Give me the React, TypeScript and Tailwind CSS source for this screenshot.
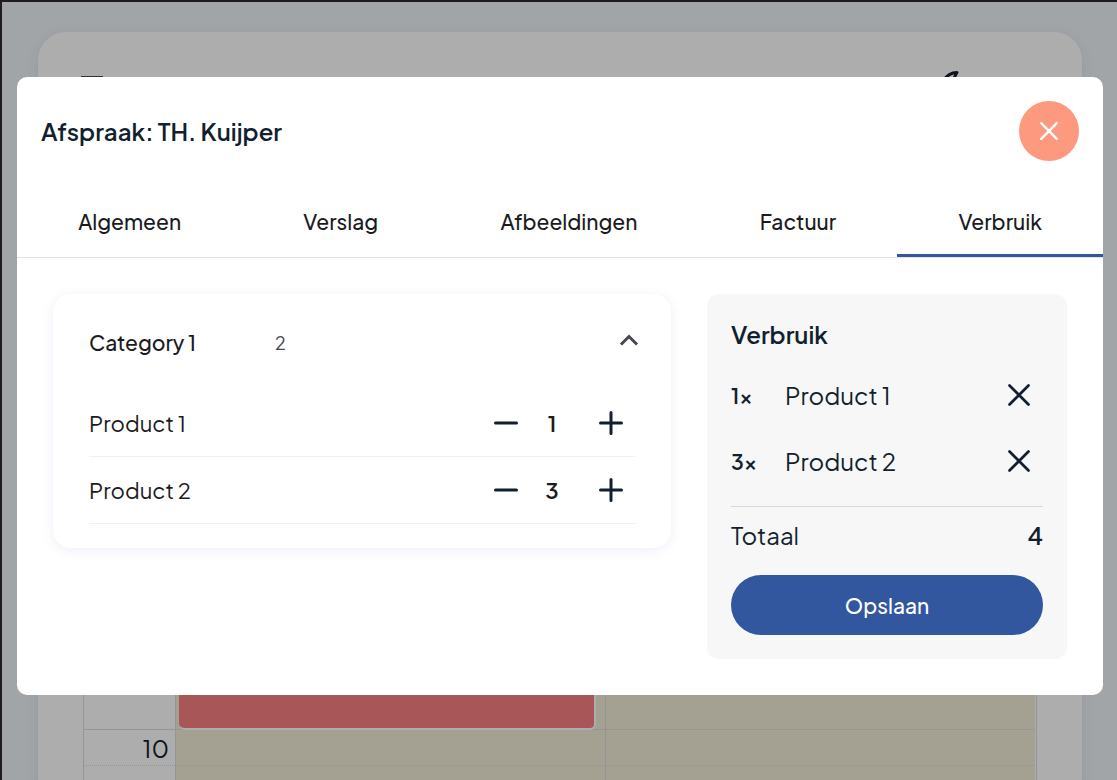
import { useState } from "react";

type Product = { id: number; name: string; amount: number };

const tabs = ["Algemeen", "Verslag", "Afbeeldingen", "Factuur", "Verbruik"];
const slots = Array.from({ length: 18 }, (_, i) => i);

function Cross({ size, width }: { size: number; width: number }) {
  return (
    <svg width={size} height={size} viewBox="0 0 22 22" fill="none" stroke="currentColor" strokeWidth={width} strokeLinecap="round" aria-hidden="true">
      <path d="M1.5 1.5 20.5 20.5M20.5 1.5 1.5 20.5" />
    </svg>
  );
}

function Slot({ index, label }: { index: number; label?: string }) {
  return (
    <div
      className={
        index % 2 === 1
          ? "h-9 border-b border-[#dcdcdc] pr-1.5 text-right text-2xl leading-9"
          : "h-9 border-b border-dotted border-[#dcdcdc] pr-1.5 text-right text-2xl leading-9"
      }
    >
      {label}
    </div>
  );
}

function Calendar() {
  return (
    <div className="pt-[30px] pr-[35px] pl-9">
      <div className="min-h-screen rounded-[28px] bg-white pr-[45px] pl-[45px] shadow-[0_2px_12px_rgba(80,100,200,0.10)]">
        <div className="flex h-[122px] items-start justify-between pt-[39px]">
          <svg width="22" height="18" viewBox="0 0 22 18" className="-ml-0.5 mt-1" fill="none" stroke="#4a4d55" strokeWidth="2" aria-hidden="true">
            <path d="M0 2h22M0 9h22M0 16h22" />
          </svg>
          <svg width="24" height="24" viewBox="0 0 24 24" className="mr-[73px]" fill="none" stroke="#0f1c2e" strokeWidth="3" strokeLinecap="round" strokeLinejoin="round" aria-hidden="true">
            <path d="M3 10C7 4 12 1.500 17 1.500C15.500 3 15 6 13 10" />
          </svg>
        </div>
        <div className="flex border-x border-[#dcdcdc]">
          <div className="w-[92px] border-r border-[#dcdcdc]">
            {slots.map((i) => (
              <Slot key={i} index={i} label={i === 16 ? "10" : undefined} />
            ))}
          </div>
          <div className="relative flex-1 border-r border-[#dcdcdc] bg-[#f3edd8]">
            {slots.map((i) => (
              <Slot key={i} index={i} />
            ))}
            <div className="absolute top-[396px] right-[9px] left-[3px] h-[180px] rounded-md border-r-2 border-b-2 border-white bg-[#f87f80]" />
          </div>
          <div className="mr-px flex-1 bg-[#f3edd8]">
            {slots.map((i) => (
              <Slot key={i} index={i} />
            ))}
          </div>
        </div>
      </div>
    </div>
  );
}

function Stepper({ product, onChange }: { product: Product; onChange: (amount: number) => void }) {
  return (
    <div className="flex items-center">
      <button type="button" aria-label={`${product.name} minder`} onClick={() => onChange(Math.max(0, product.amount - 1))} className="flex size-12 items-center justify-center text-[#121f2f]">
        <svg width="24" height="24" viewBox="0 0 24 24" stroke="currentColor" strokeWidth="3" strokeLinecap="round" aria-hidden="true">
          <path d="M1.500 12h21" />
        </svg>
      </button>
      <span className="w-11 text-center text-[22px] font-semibold">{product.amount}</span>
      <button type="button" aria-label={`${product.name} meer`} onClick={() => onChange(product.amount + 1)} className="ml-[13px] flex size-12 items-center justify-center text-[#121f2f]">
        <svg width="24" height="24" viewBox="0 0 24 24" stroke="currentColor" strokeWidth="3" strokeLinecap="round" aria-hidden="true">
          <path d="M1.500 12h21M12 1.500v21" />
        </svg>
      </button>
    </div>
  );
}

export default function App() {
  const [active, setActive] = useState("Verbruik");
  const [open, setOpen] = useState(true);
  const [products, setProducts] = useState<Product[]>([
    { id: 1, name: "Product 1", amount: 1 },
    { id: 2, name: "Product 2", amount: 3 },
  ]);
  const setAmount = (id: number, amount: number) =>
    setProducts((list) => list.map((p) => (p.id === id ? { ...p, amount } : p)));
  const used = products.filter((p) => p.amount > 0);
  const total = used.reduce((sum, p) => sum + p.amount, 0);

  return (
    <div className="relative h-screen overflow-hidden border-t-2 border-l-2 border-[#1f1b21] bg-[#edf3f7] font-['Plus_Jakarta_Sans',Inter,sans-serif] text-[#121f2f]">
      <Calendar />
      <div className="absolute inset-0 overflow-y-auto bg-black/32 pt-[75px] pr-3.5 pl-[15px]">
        <div role="dialog" aria-modal="true" aria-labelledby="dialog-title" className="rounded-[10px] bg-white">
          <header className="flex items-center justify-between p-6">
            <h1 id="dialog-title" className="text-2xl font-semibold">Afspraak: TH. Kuijper</h1>
            <button type="button" aria-label="Sluiten" className="flex size-[60px] items-center justify-center rounded-full bg-[#fc997e] text-white">
              <Cross size={18} width={3} />
            </button>
          </header>
          <div role="tablist" className="flex border-b border-[#e0e0ea]">
            {tabs.map((tab) => (
              <button
                key={tab}
                type="button"
                role="tab"
                aria-selected={tab === active}
                onClick={() => setActive(tab)}
                className={
                  tab === active
                    ? "h-[72px] flex-auto border-b-3 border-[#32579e] pt-1 text-[21px] font-medium text-[#1b1b1f]"
                    : "h-[72px] flex-auto border-b-3 border-transparent pt-1 text-[21px] font-medium text-[#1b1b1f]"
                }
              >
                {tab}
              </button>
            ))}
          </div>
          <div className="flex items-start gap-9 p-9">
            <section className="flex-1 rounded-[18px] bg-white px-9 pb-6 shadow-[0_2px_12px_rgba(80,100,200,0.10)]">
              <div className="flex h-24 items-center text-[#1b1b1f]">
                <h2 className="w-[186px] pt-0.5 text-[21px] font-medium">Category 1</h2>
                <span className="flex-1 pt-0.5 text-lg text-[#46464f]">{products.length}</span>
                <button type="button" aria-label="Category 1 in- of uitklappen" aria-expanded={open} onClick={() => setOpen(!open)} className="-mr-1 flex h-9 items-center pb-1 text-[#46464f]">
                  <svg width="20" height="14" viewBox="0 0 20 14" fill="none" stroke="currentColor" strokeWidth="3" aria-hidden="true">
                    <path d="M2 11.500 10 3.500 18 11.500" />
                  </svg>
                </button>
              </div>
              {open && (
                <ul>
                  {products.map((p) => (
                    <li key={p.id} className="flex h-[67px] items-center justify-between border-b border-[#f0f0f2] text-[#1b1b1f]">
                      <span className="text-[22px]">{p.name}</span>
                      <Stepper product={p} onChange={(amount) => setAmount(p.id, amount)} />
                    </li>
                  ))}
                </ul>
              )}
            </section>
            <aside className="w-[360px] rounded-xl bg-[#f7f7f7] p-6">
              <h2 className="mb-3 text-2xl leading-8 font-semibold">Verbruik</h2>
              <ul>
                {used.map((p) => (
                  <li key={p.id} className="flex h-[66px] items-center">
                    <span className="w-[54px] pt-0.5 text-[21px] font-semibold">{p.amount}×</span>
                    <span className="flex-1 text-2xl">{p.name}</span>
                    <button type="button" aria-label={`${p.name} verwijderen`} onClick={() => setAmount(p.id, 0)} className="flex size-12 items-center justify-center">
                      <Cross size={22} width={2.7} />
                    </button>
                  </li>
                ))}
              </ul>
              <div className="mt-3 mb-3 flex h-[57px] items-center justify-between border-t border-[#d8d8d8] text-2xl">
                <span>Totaal</span>
                <span className="font-semibold">{total}</span>
              </div>
              <button type="button" className="h-[60px] w-full rounded-full bg-[#32579e] pt-0.5 text-[21px] font-medium text-white">Opslaan</button>
            </aside>
          </div>
        </div>
      </div>
    </div>
  );
}
